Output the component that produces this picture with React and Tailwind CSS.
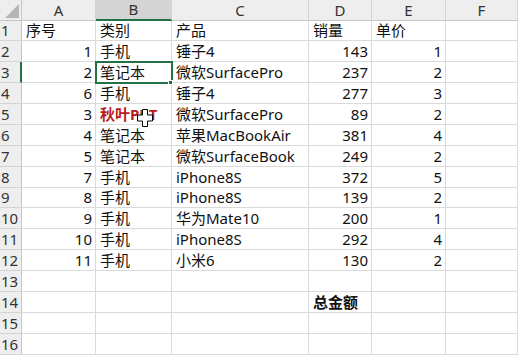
import React from 'react'

const cols = ['A', 'B', 'C', 'D', 'E', 'F']

const rows = [
  ['序号', '类别', '产品', '销量', '单价'],
  [1, '手机', '锤子4', 143, 1],
  [2, '笔记本', '微软SurfacePro', 237, 2],
  [6, '手机', '锤子4', 277, 3],
  [3, '秋叶PPT', '微软SurfacePro', 89, 2],
  [4, '笔记本', '苹果MacBookAir', 381, 4],
  [5, '笔记本', '微软SurfaceBook', 249, 2],
  [7, '手机', 'iPhone8S', 372, 5],
  [8, '手机', 'iPhone8S', 139, 2],
  [9, '手机', '华为Mate10', 200, 1],
  [10, '手机', 'iPhone8S', 292, 4],
  [11, '手机', '小米6', 130, 2],
  ['', '', '', '', ''],
  ['', '', '', '总金额', ''],
  ['', '', '', '', ''],
  ['', '', '', '', ''],
]

const Cell = ({ value, className = '' }) => {
  const isNum = typeof value === 'number'
  return (
    <div
      className={`flex items-center border-r border-b border-[#dadada] overflow-visible whitespace-nowrap ${
        isNum ? 'justify-end pr-[3px]' : 'justify-start pl-[4px]'
      } ${className}`}
    >
      {value}
    </div>
  )
}

// excel's fat white cross pointer
const Cursor = () => (
  <svg className="absolute left-[137px] top-[109px]" width="16" height="18" viewBox="0 0 16 18">
    <path
      d="M5.5 0.5h5v5.5h5v6h-5v5.5h-5v-5.5h-5v-6h5z"
      fill="#fff"
      stroke="#000"
      strokeWidth="1"
    />
  </svg>
)

export default function App() {
  return (
    <div className="relative w-[518px] h-[355px] overflow-hidden bg-white text-[15px] text-[#111] font-['Noto_Sans','Noto_Sans_CJK_SC',sans-serif]">
      <div className="grid grid-cols-[22px_74px_76px_137px_63px_74px_1fr]">
        {/* column header */}
        <div className="h-[21px] bg-[#eeeeee] border-r border-b border-[#c6c6c6] flex items-end justify-end pr-[2px] pb-[2px]">
          <div className="w-0 h-0 border-l-[14px] border-l-transparent border-b-[14px] border-b-[#b5b5b5]" />
        </div>
        {cols.map((c) => (
          <div
            key={c}
            className={`h-[21px] flex items-center justify-center border-r border-[#d4d4d4] text-[#333] ${
              c === 'B'
                ? 'bg-[#d4d4d4] border-b-2 border-b-[#217346]'
                : 'bg-[#eeeeee] border-b border-b-[#c6c6c6]'
            }`}
          >
            {c}
          </div>
        ))}

        {rows.map((r, i) => {
          const h = i === 0 || i === 8 ? 'h-[20px]' : 'h-[21px]'
          return (
            <React.Fragment key={i}>
              <div
                className={`${h} flex items-center pl-[1px] bg-[#eeeeee] border-b border-[#d4d4d4] text-[#333] ${
                  i === 2 ? 'border-r-2 border-r-[#217346] bg-[#d9d9d9]' : 'border-r border-r-[#c6c6c6]'
                }`}
              >
                {i + 1}
              </div>
              <Cell value={r[0]} className={h} />
              <Cell
                value={r[1]}
                className={`${h} ${i === 4 ? 'font-bold text-[#b81c1c]' : ''} ${
                  i === 2 ? 'relative outline-2 outline-[#217346] -outline-offset-1' : ''
                }`}
              />
              <Cell value={r[2]} className={h} />
              <Cell value={r[3]} className={`${h} ${i === 13 ? 'font-bold' : ''}`} />
              <Cell value={r[4]} className={h} />
              <Cell value="" className={h} />
            </React.Fragment>
          )
        })}
      </div>
      {/* fill handle */}
      <div className="absolute left-[168px] top-[80px] w-[5px] h-[5px] bg-[#217346] border border-white" />
      <Cursor />
    </div>
  )
}
